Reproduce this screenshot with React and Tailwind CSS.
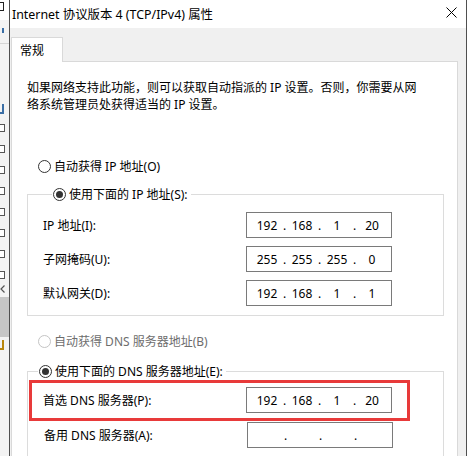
import React from 'react';

const FONT = "font-['Noto_Sans','Noto_Sans_CJK_SC',sans-serif]";

function Radio({ checked, disabled, label }) {
  return (
    <span className="flex items-center h-[17px]">
      <span
        className={`w-[13px] h-[13px] rounded-full border bg-white flex items-center justify-center ${
          disabled ? 'border-[#c4c4c4]' : 'border-[#333333]'
        }`}
      >
        {checked && <span className="w-[7px] h-[7px] rounded-full bg-[#333333]" />}
      </span>
      <span className={`ml-[3px] ${disabled ? 'text-[#6d6d6d]' : 'text-black'}`}>{label}</span>
    </span>
  );
}

function IpBox({ parts }) {
  return (
    <div className="w-[146px] h-[26px] border border-[#7a7a7a] bg-white flex items-center pl-[6px]">
      {parts.map((p, i) => (
        <React.Fragment key={i}>
          {i > 0 && <span className="w-[7px] text-center">.</span>}
          <span className="w-[28px] text-center">{p}</span>
        </React.Fragment>
      ))}
    </div>
  );
}

function Row({ label, parts }) {
  return (
    <div className="grid grid-cols-[203px_146px] items-center">
      <span>{label}</span>
      <IpBox parts={parts} />
    </div>
  );
}

// sliver of the window behind the dialog (only unreadable fragments show)
const BackStrip = () => (
  <div className="w-[9px] shrink-0 bg-[#f3f3f3] flex flex-col overflow-hidden">
    <div className="h-[20px] bg-white pt-[2px]">
      <div className="w-[4px] h-[9px] border border-l-0 border-[#222]" />
    </div>
    <div className="mt-[8px] w-[2px] h-[5px] ml-[2px] bg-[#3a6ea5]" />
    <div className="mt-[10px] h-px bg-[#d6d6d6]" />
    <div className="mt-[60px] w-[4px] h-[10px] border-r-2 border-b-2 border-[#3a6ea5]" />
    <div className="mt-[10px] flex flex-col gap-[13px]">
      {[0, 1, 2, 3, 4, 5, 6, 7].map((i) => (
        <div key={i} className="w-[5px] h-[8px] border border-[#555] border-l-0 bg-white" />
      ))}
    </div>
    <svg width="6" height="8" viewBox="0 0 6 8" className="mt-[6px]">
      <path d="M4.5 0.5 L1 4 L4.5 7.5" stroke="#555" strokeWidth="1.2" fill="none" />
    </svg>
    <div className="mt-[4px] h-[40px] bg-[#c6c6c6]" />
    <div className="mt-[3px] w-[4px] h-[10px] border-r-2 border-b-2 border-[#b8860b]" />
  </div>
);

export default function App() {
  return (
    <div className={`w-[468px] h-[456px] flex overflow-hidden bg-white text-[12px] text-black ${FONT}`}>
      <BackStrip />

      <div className="w-[458px] shrink-0 flex flex-col border-x border-[#4f4f4f]">
        {/* title bar */}
        <div className="h-[28px] shrink-0 bg-white flex items-center pl-[2px] pr-[9px]">
          <span className="flex-1 leading-[17px] text-[12.4px]">Internet 协议版本 4 (TCP/IPv4) 属性</span>
          <svg width="11" height="11" viewBox="0 0 11 11" className="mb-[4px]">
            <path d="M0.5 0.5 L10.5 10.5 M10.5 0.5 L0.5 10.5" stroke="#000" strokeWidth="1" fill="none" />
          </svg>
        </div>

        {/* body */}
        <div className="flex-1 bg-[#f0f0f0] pt-[9px] pl-px pr-[8px] flex flex-col">
          {/* tabs */}
          <div className="flex">
            <div className="w-[52px] h-[25px] bg-white border border-b-0 border-[#d9d9d9] pl-[8px] flex items-center leading-[17px] relative -mb-px z-10">
              常规
            </div>
          </div>

          {/* panel */}
          <div className="flex-1 bg-white border border-[#d9d9d9] pt-[17px] pl-[15px] pr-[13px] leading-[17px]">
            <p>
              如果网络支持此功能，则可以获取自动指派的 IP 设置。否则，你需要从网
              <br />
              络系统管理员处获得适当的 IP 设置。
            </p>

            <div className="mt-[45px] ml-[11px]">
              <Radio label="自动获得 IP 地址(O)" />
            </div>

            <fieldset className="mt-[11px] border border-[#dcdcdc] pl-[15px] pb-[9px]">
              <legend className="ml-[9px] pl-px pr-[3px]">
                <Radio checked label="使用下面的 IP 地址(S):" />
              </legend>
              <div className="pt-[9px] flex flex-col gap-[8px]">
                <Row label="IP 地址(I):" parts={['192', '168', '1', '20']} />
                <Row label="子网掩码(U):" parts={['255', '255', '255', '0']} />
                <Row label="默认网关(D):" parts={['192', '168', '1', '1']} />
              </div>
            </fieldset>

            <div className="mt-[17px] ml-[11px]">
              <Radio disabled label="自动获得 DNS 服务器地址(B)" />
            </div>

            <fieldset className="mt-[13px] border border-[#dcdcdc] border-b-0 pl-px h-[120px]">
              <legend className="ml-[9px] pl-px pr-[3px]">
                <Radio checked label="使用下面的 DNS 服务器地址(E):" />
              </legend>
              <div className="w-[381px] border-[3px] border-[#e83a3a] pl-[11px] pt-[4px] pb-[5px]">
                <Row label="首选 DNS 服务器(P):" parts={['192', '168', '1', '20']} />
              </div>
              <div className="pl-[15px] pt-px">
                <Row label="备用 DNS 服务器(A):" parts={['', '', '', '']} />
              </div>
            </fieldset>
          </div>
        </div>
      </div>
    </div>
  );
}
